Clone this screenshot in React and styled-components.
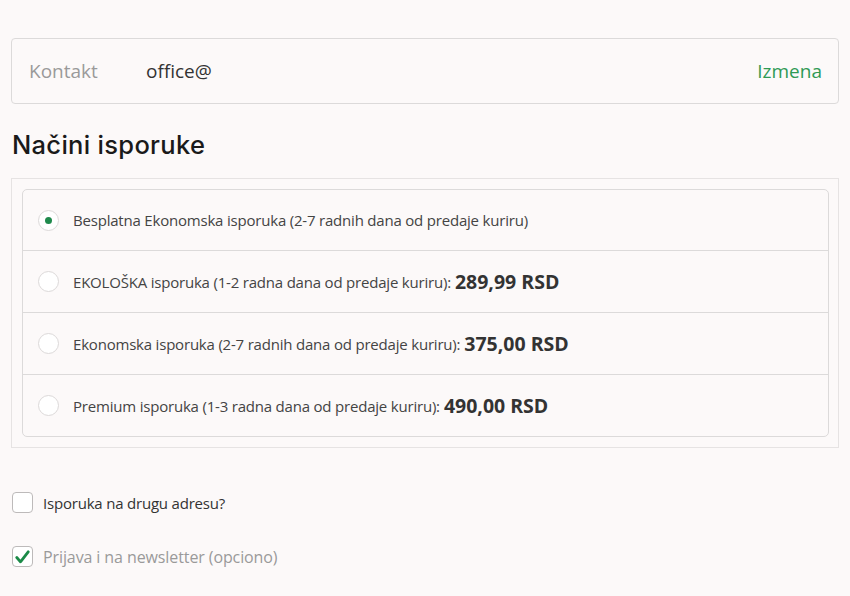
import React from "react";
import styled, { createGlobalStyle } from "styled-components";

const GlobalStyle = createGlobalStyle`
  html, body {
    margin: 0;
    padding: 0;
    background: #fcf9f9;
  }
  body {
    font-family: "Open Sans", "Liberation Sans", sans-serif;
    color: #333;
  }
`;

const Page = styled.div`
  width: 850px;
  height: 596px;
  padding: 38px 11px 0 11px;
  box-sizing: border-box;
  overflow: hidden;
`;

const ContactBox = styled.div`
  display: flex;
  align-items: center;
  height: 66px;
  box-sizing: border-box;
  padding: 0 16px 0 17px;
  border: 1px solid #dcdada;
  border-radius: 4px;
  font-size: 19px;
`;

const ContactLabel = styled.span`
  color: #9a9a9a;
  width: 117px;
`;

const ContactValue = styled.span`
  color: #333;
  flex: 1;
`;

const EditLink = styled.a`
  color: #2f9a55;
  text-decoration: none;
  cursor: pointer;
`;

const Heading = styled.h2`
  font-family: Inter, "Noto Sans", sans-serif;
  font-weight: 500;
  font-size: 25.5px;
  color: #1a1a1a;
  margin: 25px 0 0 1px;
  line-height: 32px;
  letter-spacing: 0.3px;
`;

const Fieldset = styled.div`
  margin-top: 17px;
  border: 1px solid #e6e3e3;
  padding: 10px 9px 10px 10px;
`;

const MethodList = styled.ul`
  list-style: none;
  margin: 0;
  padding: 0;
  border: 1px solid #dcdada;
  border-radius: 5px;
`;

const MethodRow = styled.li`
  display: flex;
  align-items: center;
  height: ${(p) => (p.$first ? "60px" : "62px")};
  box-sizing: border-box;
  padding-left: 15px;
  font-size: 15px;
  letter-spacing: -0.2px;
  color: #444;
  border-top: ${(p) => (p.$first ? "none" : "1px solid #dcdada")};
`;

const Radio = styled.span`
  width: 21px;
  height: 21px;
  border-radius: 50%;
  border: 1.5px solid #dcd9d9;
  background: #fff;
  box-sizing: border-box;
  display: flex;
  align-items: center;
  justify-content: center;
  margin-right: 14px;
  flex-shrink: 0;

  &::after {
    content: "";
    width: 7px;
    height: 7px;
    border-radius: 50%;
    background: ${(p) => (p.$checked ? "#1f8a4c" : "transparent")};
  }
`;

const Price = styled.strong`
  font-size: 19.5px;
  font-weight: 700;
  letter-spacing: 0;
  color: #333;
  margin-left: 4px;
`;

const Options = styled.div`
  margin-top: 44px;
  display: flex;
  flex-direction: column;
  gap: 33px;
`;

const CheckRow = styled.label`
  display: flex;
  align-items: center;
  height: 21px;
  font-size: ${(p) => (p.$muted ? "16px" : "15px")};
  letter-spacing: ${(p) => (p.$muted ? "-0.1px" : "-0.2px")};
  color: ${(p) => (p.$muted ? "#9a9a9a" : "#333")};
  margin-left: 1px;
`;

const Box = styled.span`
  width: 21px;
  height: 21px;
  box-sizing: border-box;
  border: 1.5px solid #bdbaba;
  border-radius: 4px;
  background: #fff;
  margin-right: 10px;
  display: flex;
  align-items: center;
  justify-content: center;
`;

const methods = [
  { text: "Besplatna Ekonomska isporuka (2-7 radnih dana od predaje kuriru)", checked: true },
  { text: "EKOLOŠKA isporuka (1-2 radna dana od predaje kuriru):", price: "289,99 RSD" },
  { text: "Ekonomska isporuka (2-7 radnih dana od predaje kuriru):", price: "375,00 RSD" },
  { text: "Premium isporuka (1-3 radna dana od predaje kuriru):", price: "490,00 RSD" },
];

export default function App() {
  return (
    <>
      <GlobalStyle />
      <Page>
        <ContactBox>
          <ContactLabel>Kontakt</ContactLabel>
          <ContactValue>office@</ContactValue>
          <EditLink>Izmena</EditLink>
        </ContactBox>

        <Heading>Načini isporuke</Heading>

        <Fieldset>
          <MethodList>
            {methods.map((m, i) => (
              <MethodRow key={i} $first={i === 0}>
                <Radio $checked={m.checked} />
                <span>{m.text}</span>
                {m.price && <Price>{m.price}</Price>}
              </MethodRow>
            ))}
          </MethodList>
        </Fieldset>

        <Options>
          <CheckRow>
            <Box />
            Isporuka na drugu adresu?
          </CheckRow>
          <CheckRow $muted>
            <Box>
              <svg width="15" height="14" viewBox="0 0 15 14">
                <path d="M1.8 7.5 L5.5 11.8 L13.2 1.8" fill="none" stroke="#1b8a47" strokeWidth="2.8" strokeLinecap="round" strokeLinejoin="round" />
              </svg>
            </Box>
            Prijava i na newsletter (opciono)
          </CheckRow>
        </Options>
      </Page>
    </>
  );
}
